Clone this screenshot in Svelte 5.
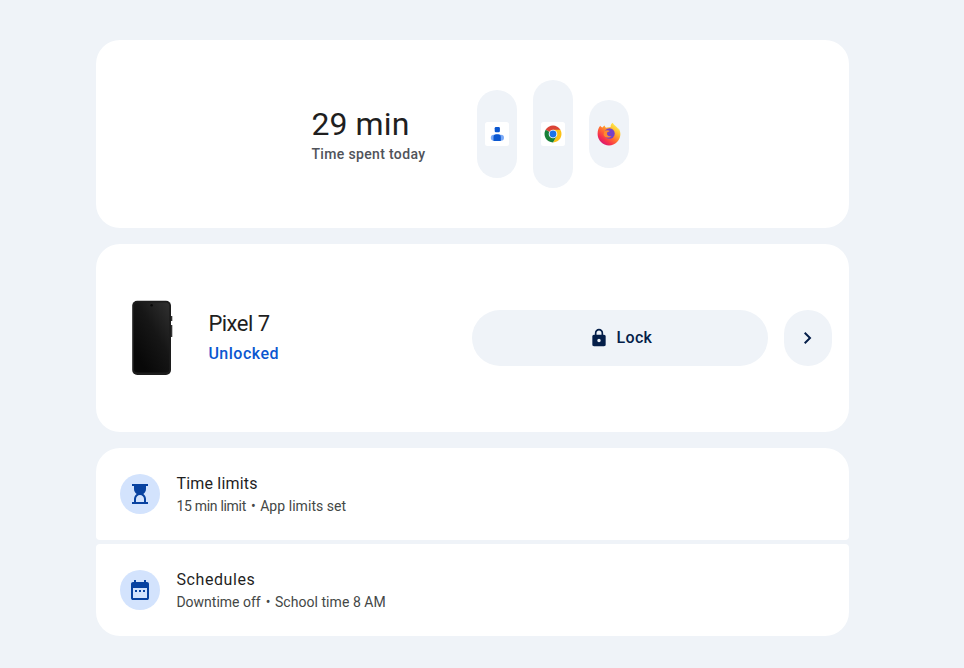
<script lang="ts">
  const limits = [
    {
      icon: 'hourglass',
      title: 'Time limits',
      titleSpacing: 0.2,
      details: [
        { text: '15 min limit', spacing: -0.3 },
        { text: 'App limits set', spacing: 0.05 },
      ],
    },
    {
      icon: 'calendar',
      title: 'Schedules',
      titleSpacing: 0.6,
      details: [
        { text: 'Downtime off', spacing: 0 },
        { text: 'School time 8 AM', spacing: 0.05 },
      ],
    },
  ];
</script>

<main class="page">
  <section class="card usage">
    <div class="summary">
      <div class="total">29 min</div>
      <div class="caption">Time spent today</div>
    </div>
    <div class="apps">
      <div class="pill medium">
        <svg width="24" height="24" viewBox="0 0 24 24" aria-hidden="true">
          <rect width="24" height="24" rx="2.5" fill="#fff" />
          <rect x="5.8" y="12.8" width="13.2" height="6" rx="3" fill="#7baaf7" />
          <rect x="9.7" y="5" width="5.2" height="5.2" rx="1.2" fill="#0b57d0" />
          <path d="M8.5 19v-4a2.700 2.700 0 0 1 2.700-2.700h1.900a2.700 2.700 0 0 1 2.700 2.700v4z" fill="#0b57d0" />
        </svg>
      </div>
      <div class="pill tall">
        <svg width="24" height="24" viewBox="0 0 24 24" aria-hidden="true">
          <rect width="24" height="24" rx="2.5" fill="#fff" />
          <path d="M12 12 4.640 7.750A8.500 8.500 0 0 1 19.360 7.750z" fill="#db4437" />
          <path d="M12 7.750h7.360A8.500 8.500 0 0 1 12 20.500l3.680-6.400z" fill="#fbc116" />
          <path d="M4.640 7.750A8.500 8.500 0 0 0 12 20.500l3.680-6.380L12 12z" fill="#188038" />
          <circle cx="12" cy="12" r="4.300" fill="#fff" />
          <circle cx="12" cy="12" r="3.400" fill="#1a73e8" />
        </svg>
      </div>
      <div class="pill short">
        <svg width="24" height="24" viewBox="0 0 24 24" aria-hidden="true">
          <defs>
            <linearGradient id="flame" x1="0.85" y1="0.1" x2="0.2" y2="0.9">
              <stop offset="0" stop-color="#fff04d" />
              <stop offset="0.3" stop-color="#ffb52e" />
              <stop offset="0.58" stop-color="#ff6a32" />
              <stop offset="0.82" stop-color="#f72f4e" />
              <stop offset="1" stop-color="#d91b70" />
            </linearGradient>
          </defs>
          <path d="M15.500.8c-2 1.700-2 3.400-1.800 4.300L9 5.700C8.400 5.300 7.700 4.300 7.700 3.500 6.500 4 6 5 5.600 5.500 4.500 5.200 3.500 4.400 3.300 3.800 1.500 5.700.6 8.700.6 12a11.400 11.400 0 0 0 22.800 0c0-2.600-1.100-5-2.100-6.100.2.800.3 1.400.3 1.800-1.200-3-4.100-3.700-6.100-6.900z" fill="url(#flame)" />
          <circle cx="12.5" cy="11.500" r="5.2" fill="#7542c8" />
          <path d="M7.300 9.200c2-1.600 4.100-1 5.700-.2-1 .2-1.500 1-2.900 1.500-.7 3.300 2 4.500 4.400 3.500-1.600 2.300-7 2.100-7.900-1.300z" fill="#ff8a2d" />
        </svg>
      </div>
    </div>
  </section>

  <section class="card device">
    <svg class="phone" width="41" height="76" viewBox="0 0 41 76" aria-hidden="true">
      <defs>
        <linearGradient id="screen" x1="1" y1="0" x2="0.25" y2="0.9">
          <stop offset="0" stop-color="#303030" />
          <stop offset="0.5" stop-color="#161616" />
          <stop offset="1" stop-color="#080808" />
        </linearGradient>
      </defs>
      <path d="M39 16h1.300v5H39zM39 25h1.300v12H39z" fill="#333" />
      <rect x="0.2" y="0.7" width="38.8" height="74.3" rx="5" fill="#1c1c1c" />
      <rect x="2" y="2.6" width="35.2" height="70" rx="3.5" fill="url(#screen)" />
      <circle cx="19.6" cy="5.2" r="1.2" fill="#080808" />
    </svg>
    <div class="about">
      <div class="name">Pixel 7</div>
      <div class="status">Unlocked</div>
    </div>
    <button type="button" class="lock">
      <svg width="20" height="20" viewBox="0 -960 960 960" fill="currentColor" aria-hidden="true">
        <path d="M240-80q-33 0-56.500-23.500T160-160v-400q0-33 23.500-56.500T240-640h40v-80q0-83 58.500-141.500T480-920q83 0 141.500 58.500T680-720v80h40q33 0 56.500 23.500T800-560v400q0 33-23.500 56.500T720-80H240Zm240-200q33 0 56.500-23.500T560-360q0-33-23.500-56.500T480-440q-33 0-56.500 23.500T400-360q0 33 23.500 56.500T480-280ZM360-640h240v-80q0-50-35-85t-85-35q-50 0-85 35t-35 85v80Z" />
      </svg>
      <span>Lock</span>
    </button>
    <button type="button" class="next" aria-label="Device details">
      <svg width="24" height="24" viewBox="0 -960 960 960" fill="currentColor" aria-hidden="true">
        <path d="M504-480 320-664l56-56 240 240-240 240-56-56 184-184Z" />
      </svg>
    </button>
  </section>

  <section class="list">
    {#each limits as item}
      <div class="row">
        <span class="badge">
          {#if item.icon === 'hourglass'}
            <svg width="24" height="24" viewBox="0 -960 960 960" fill="currentColor" aria-hidden="true">
              <path d="M320-160h320v-120q0-66-47-113t-113-47q-66 0-113 47t-47 113v120ZM160-80v-80h80v-120q0-61 28.500-114.500T348-480q-51-32-79.500-85.500T240-680v-120h-80v-80h640v80h-80v120q0 61-28.500 114.500T612-480q51 32 79.500 85.500T720-280v120h80v80H160Z" />
            </svg>
          {:else}
            <svg width="24" height="24" viewBox="0 -960 960 960" fill="currentColor" aria-hidden="true">
              <path d="M200-80q-33 0-56.500-23.500T120-160v-560q0-33 23.500-56.500T200-800h40v-80h80v80h320v-80h80v80h40q33 0 56.500 23.500T840-720v560q0 33-23.500 56.500T760-80H200Zm0-80h560v-400H200v400Zm80-240v-80h80v80h-80Zm160 0v-80h80v80h-80Zm160 0v-80h80v80h-80Z" />
            </svg>
          {/if}
        </span>
        <div class="text">
          <div class="title" style:letter-spacing="{item.titleSpacing}px">{item.title}</div>
          <div class="detail">
            {#each item.details as part, i}
              {#if i > 0}<span class="dot">•</span>{/if}
              <span style:letter-spacing="{part.spacing}px">{part.text}</span>
            {/each}
          </div>
        </div>
      </div>
    {/each}
  </section>
</main>

<style>
  :global(body) {
    background: #eff3f8;
    font-family: "Google Sans", Roboto, sans-serif;
    color: #1f1f1f;
  }
  .page {
    display: flex;
    flex-direction: column;
    gap: 16px;
    width: 752.4px;
    padding: 40px 0 32px;
    margin-left: 96.4px;
  }
  .card {
    display: flex;
    align-items: center;
    box-sizing: border-box;
    height: 188px;
    border-radius: 24px;
    background: #fff;
  }
  .usage {
    padding-left: 215px;
  }
  .summary {
    width: 166px;
    white-space: nowrap;
  }
  .total {
    font-size: 32px;
    line-height: 40px;
    letter-spacing: 0.1px;
  }
  .caption {
    font-size: 14px;
    font-weight: 500;
    line-height: 20px;
    letter-spacing: 0.35px;
    color: #50535a;
  }
  .apps {
    display: flex;
    align-items: center;
    gap: 16px;
  }
  .pill {
    display: flex;
    align-items: center;
    justify-content: center;
    width: 40px;
    border-radius: 20px;
    background: #eff3f8;
  }
  .medium {
    height: 88px;
  }
  .tall {
    height: 108px;
  }
  .short {
    height: 68px;
  }
  .device {
    padding: 0 16.4px 0 35.4px;
  }
  .phone {
    flex-shrink: 0;
  }
  .about {
    flex: 1;
    padding: 1px 0 0 35.6px;
  }
  .name {
    font-size: 22px;
    line-height: 30px;
    letter-spacing: -0.5px;
  }
  .status {
    font-size: 16px;
    font-weight: 500;
    line-height: 29px;
    letter-spacing: 0.5px;
    color: #0b57d0;
  }
  button {
    display: flex;
    align-items: center;
    justify-content: center;
    height: 56px;
    padding: 0;
    border: none;
    border-radius: 28px;
    background: #eff3f8;
    color: #041e49;
    font: 500 16px/24px "Google Sans", Roboto, sans-serif;
    letter-spacing: 0.3px;
    cursor: pointer;
  }
  .lock {
    gap: 8px;
    width: 296px;
    margin-right: 16px;
  }
  .next {
    width: 48px;
  }
  .list {
    display: flex;
    flex-direction: column;
    gap: 4px;
  }
  .row {
    display: flex;
    align-items: center;
    gap: 16px;
    box-sizing: border-box;
    height: 92px;
    padding: 0 24px;
    border-radius: 4px;
    background: #fff;
  }
  .row:first-child {
    border-radius: 24px 24px 4px 4px;
  }
  .row:last-child {
    border-radius: 4px 4px 24px 24px;
  }
  .badge {
    display: flex;
    align-items: center;
    justify-content: center;
    width: 40px;
    height: 40px;
    border-radius: 50%;
    background: #d3e3fd;
    color: #0842a0;
  }
  .title {
    font-size: 16px;
    line-height: 24px;
  }
  .detail {
    font-size: 14px;
    line-height: 20px;
    color: #444746;
  }
  .dot {
    margin: 0 1px 0 5px;
  }
</style>
